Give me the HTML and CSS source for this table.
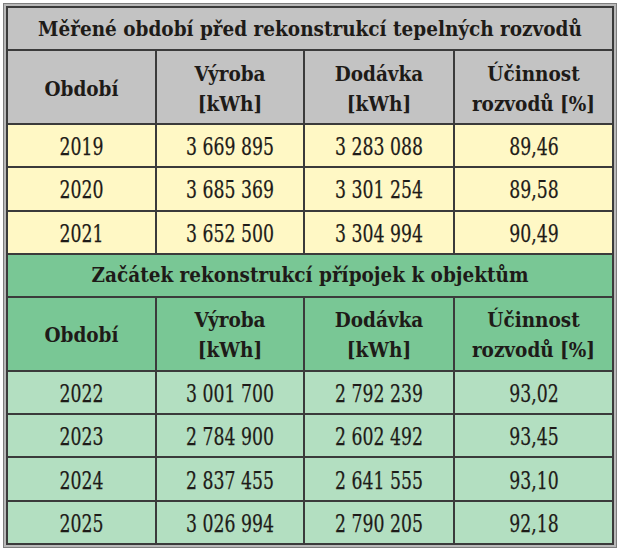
FILE: index.html
```html
<!DOCTYPE html>
<html lang="cs">
<head>
<meta charset="utf-8">
<title>Účinnost rozvodů</title>
<link rel="stylesheet" href="styles.css">
</head>
<body>
<div class="frame">
<table class="tbl">
  <colgroup>
    <col class="c1"><col class="c2"><col class="c3"><col class="c4">
  </colgroup>
  <tr class="title grey"><th colspan="4">Měřené období před rekonstrukcí tepelných rozvodů</th></tr>
  <tr class="head grey">
    <th>Období</th>
    <th>Výroba<br>[kWh]</th>
    <th>Dodávka<br>[kWh]</th>
    <th>Účinnost<br>rozvodů [%]</th>
  </tr>
  <tr class="data yellow"><td><span class="n">2019</span></td><td><span class="n">3 669 895</span></td><td><span class="n">3 283 088</span></td><td><span class="n">89,46</span></td></tr>
  <tr class="data yellow"><td><span class="n">2020</span></td><td><span class="n">3 685 369</span></td><td><span class="n">3 301 254</span></td><td><span class="n">89,58</span></td></tr>
  <tr class="data yellow"><td><span class="n">2021</span></td><td><span class="n">3 652 500</span></td><td><span class="n">3 304 994</span></td><td><span class="n">90,49</span></td></tr>
  <tr class="title green"><th colspan="4">Začátek rekonstrukcí přípojek k objektům</th></tr>
  <tr class="head green">
    <th>Období</th>
    <th>Výroba<br>[kWh]</th>
    <th>Dodávka<br>[kWh]</th>
    <th>Účinnost<br>rozvodů [%]</th>
  </tr>
  <tr class="data mint"><td><span class="n">2022</span></td><td><span class="n">3 001 700</span></td><td><span class="n">2 792 239</span></td><td><span class="n">93,02</span></td></tr>
  <tr class="data mint"><td><span class="n">2023</span></td><td><span class="n">2 784 900</span></td><td><span class="n">2 602 492</span></td><td><span class="n">93,45</span></td></tr>
  <tr class="data mint"><td><span class="n">2024</span></td><td><span class="n">2 837 455</span></td><td><span class="n">2 641 555</span></td><td><span class="n">93,10</span></td></tr>
  <tr class="data mint"><td><span class="n">2025</span></td><td><span class="n">3 026 994</span></td><td><span class="n">2 790 205</span></td><td><span class="n">92,18</span></td></tr>
</table>
</div>
</body>
</html>
```

FILE: styles.css
```css
html, body {
  margin: 0;
  padding: 0;
  background: #ffffff;
}

.frame {
  margin: 3px 0 0 3px;
  width: 614px;
  box-sizing: border-box;
  border: 1px solid #7e7e7e;
  background: #b9b9b9;
  padding: 2px;
}

.tbl {
  width: 100%;
  border-collapse: collapse;
  table-layout: fixed;
  font-family: "DejaVu Serif Condensed", "DejaVu Serif", serif;
  font-stretch: condensed;
  color: #1e1b18;
  text-align: center;
}

.c1 { width: 149px; }
.c2 { width: 148px; }
.c3 { width: 150px; }
.c4 { width: auto; }

.tbl th,
.tbl td {
  border: 2px solid #3b3b3b;
  padding: 0;
  text-align: center;
  vertical-align: middle;
}

.tbl th {
  font-weight: bold;
  font-size: 20.5px;
}

.title th {
  height: 41px;
  line-height: 24px;
}

.head th {
  height: 69px;
  padding-top: 3px;
  line-height: 30px;
}

.data td {
  height: 38.3px;
  padding-top: 3px;
  font-size: 24px;
  line-height: 28px;
}

.n {
  display: inline-block;
  transform: scaleX(0.8);
  white-space: nowrap;
  -webkit-text-stroke: 0.25px #1e1b18;
}

.grey { background: #c3c3c3; }
.yellow { background: #fff8c5; }
.green { background: #79c795; }
.mint { background: #b3dfc1; }
```
